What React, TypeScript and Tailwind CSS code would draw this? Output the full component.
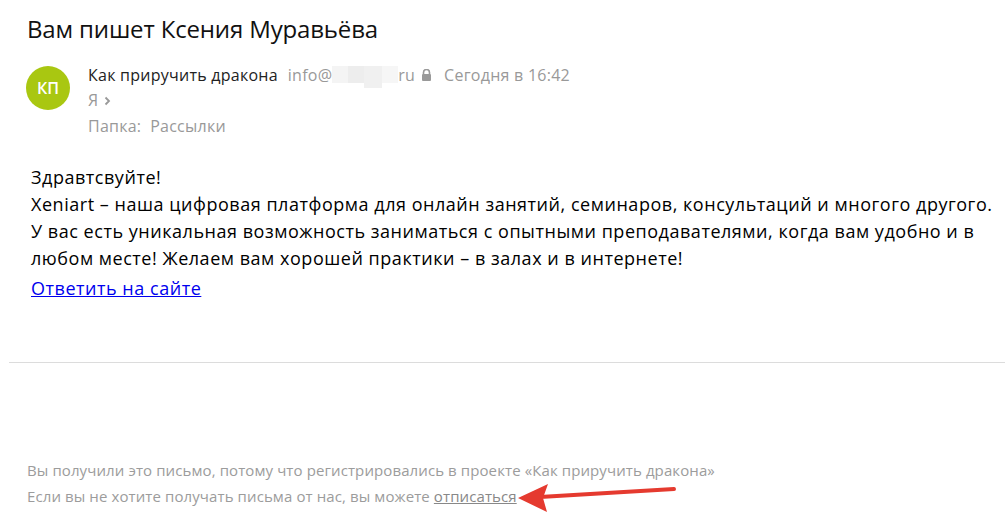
import React from "react";

export default function App() {
  return (
    <div className="w-[1005px] h-[522px] bg-white overflow-hidden relative" style={{ fontFamily: '"Open Sans", "Noto Sans", sans-serif' }}>
      <div className="pl-[27px] pt-[13px]">
        <h1 className="text-[24px] leading-[32px] tracking-[-0.15px] text-[#111]">Вам пишет Ксения Муравьёва</h1>
      </div>
      <div className="flex pl-[26px] pt-[17px]">
        <div className="w-[44px] h-[44px] rounded-full bg-[#a9c711] flex items-center justify-center text-white text-[16px] font-semibold shrink-0 mt-[4px]">
          КП
        </div>
        <div className="ml-[18px] text-[16px] leading-[25px] tracking-[0.25px]">
          <div className="flex items-center whitespace-nowrap">
            <span className="text-[#222]">Как приручить дракона</span>
            <span className="ml-[10px] text-[#999]">info@</span>
            <span className="inline-flex items-start h-[22px] mt-[4px]">
              <span className="w-[16px] h-[17px] bg-[#f4f4f4]"></span>
              <span className="w-[16px] h-[17px] bg-[#ededed]"></span>
              <span className="w-[18px] h-[22px] bg-[#f0f0f0]"></span>
              <span className="w-[16px] h-[17px] bg-[#f6f6f6]"></span>
            </span>
            <span className="text-[#999]">ru</span>
            <svg className="ml-[6px]" width="11" height="12" viewBox="0 0 11 12">
              <path d="M2.5 5V3.5a3 3 0 0 1 6 0V5" fill="none" stroke="#999" strokeWidth="1.6" />
              <rect x="1" y="5" width="9" height="7" rx="1" fill="#999" />
            </svg>
            <span className="ml-[12px] text-[#999]">Сегодня в 16:42</span>
          </div>
          <div className="flex items-center text-[#999]">
            <span>Я</span>
            <svg className="ml-[6px]" width="7" height="10" viewBox="0 0 7 10">
              <path d="M1.5 1.5L5 5L1.5 8.5" fill="none" stroke="#999" strokeWidth="1.8" />
            </svg>
          </div>
          <div className="text-[#999] mt-[1px]">
            Папка:&nbsp; Рассылки
          </div>
        </div>
      </div>
      <div className="pl-[31px] pt-[25px] text-[18px] leading-[27px] tracking-[0.53px] text-black">
        <div>Здравтсвуйте!</div>
        <div className="whitespace-nowrap">Xeniart – наша цифровая платформа для онлайн занятий, семинаров, консультаций и многого другого.</div>
        <div className="whitespace-nowrap">У вас есть уникальная возможность заниматься с опытными преподавателями, когда вам удобно и в</div>
        <div className="whitespace-nowrap">любом месте! Желаем вам хорошей практики – в залах и в интернете!</div>
        <div className="mt-[3px]">
          <a href="#" className="text-[#0000ee] underline">Ответить на сайте</a>
        </div>
      </div>
      <div className="ml-[9px] mt-[60px] h-px bg-[#dcdcdc]"></div>
      <div className="pl-[27px] pt-[94px] text-[15px] leading-[26px] tracking-[0.1px] text-[#9c9c9c]">
        <div className="whitespace-nowrap">Вы получили это письмо, потому что регистрировались в проекте «Как приручить дракона»</div>
        <div className="whitespace-nowrap">
          Если вы не хотите получать письма от нас, вы можете <a href="#" className="underline text-[#888]">отписаться</a>
        </div>
      </div>
      <svg className="absolute left-[510px] top-[478px]" width="175" height="36" viewBox="0 0 175 36">
        <path d="M164 11 L30 19" stroke="#e53a2f" strokeWidth="4" strokeLinecap="round" fill="none" />
        <path d="M8 20 L38 6 L33 20 L37 34 Z" fill="#e53a2f" />
      </svg>
    </div>
  );
}
